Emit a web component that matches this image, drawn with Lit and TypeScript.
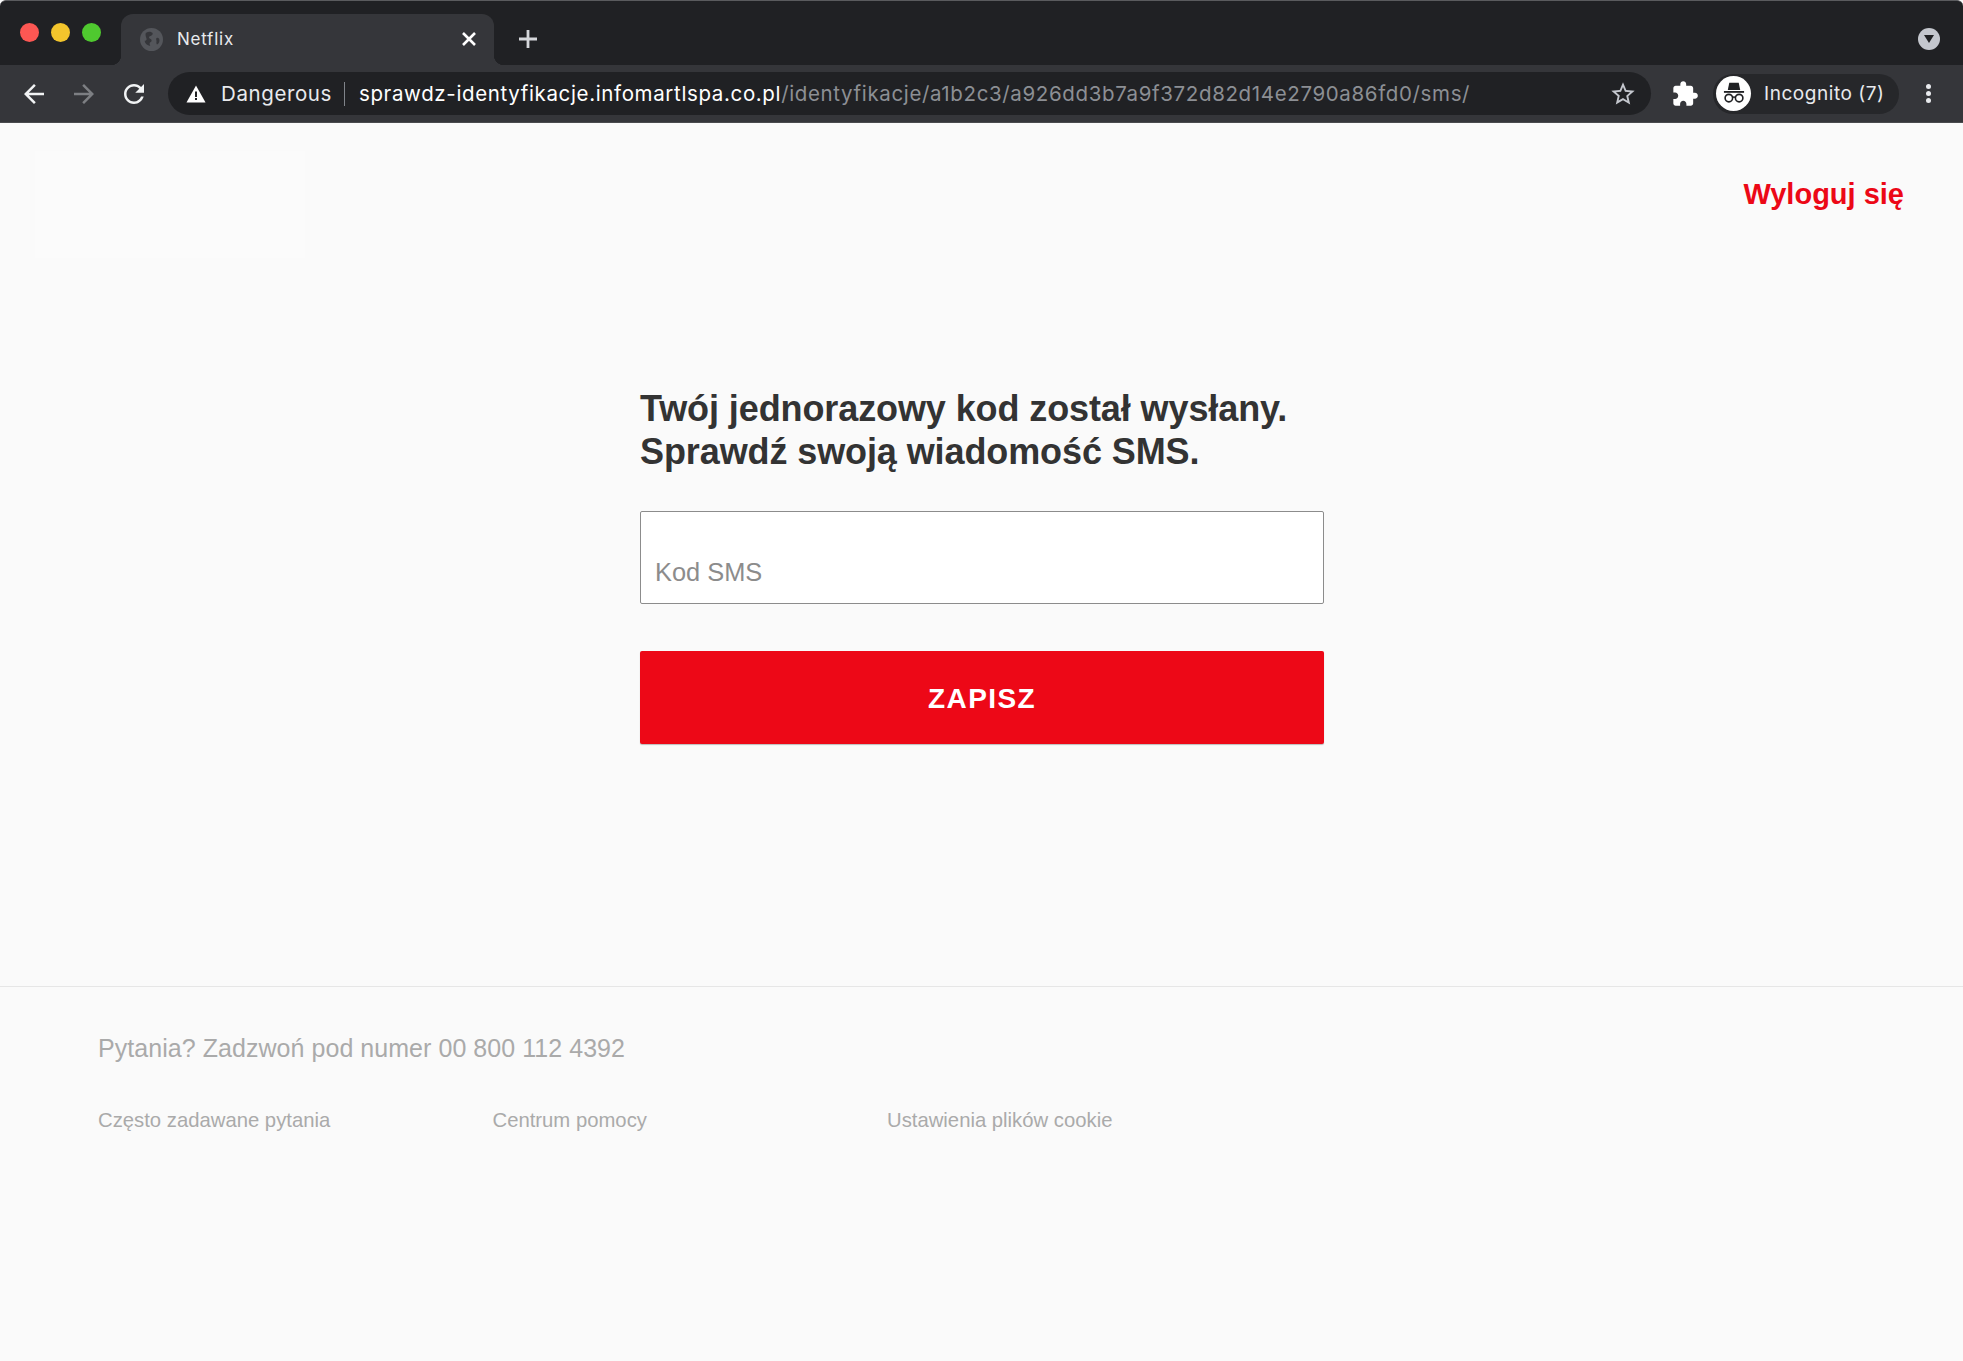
import { LitElement, html, css } from "lit";
import { customElement } from "lit/decorators.js";

@customElement("app-root")
export class AppRoot extends LitElement {
  static styles = css`
    :host { display: block; min-height: 100vh; background: #fafafa; font-family: "Liberation Sans", Arial, sans-serif; }
    .chrome { font-family: Inter, "Noto Sans", sans-serif; color: #e8eaed; }
    .strip { height: 65px; box-sizing: border-box; background: #202124; border-top: 1px solid #5a5b5e; border-radius: 6px 6px 0 0; display: flex; align-items: flex-end; padding: 0 23px 0 20px; }
    .lights { display: flex; gap: 12px; align-self: flex-start; margin-top: 22px; width: 101px; }
    .light { width: 19px; height: 19px; border-radius: 50%; }
    .red { background: #fc5753; } .yellow { background: #f3c52c; } .green { background: #4fc92f; }
    .tab { position: relative; width: 373px; height: 51px; box-sizing: border-box; background: #35363a; border-radius: 12px 12px 0 0; display: flex; align-items: center; padding: 0 15px 1px 19px; }
    .tab::before, .tab::after { content: ""; position: absolute; bottom: 0; width: 10px; height: 10px; }
    .tab::before { left: -10px; background: radial-gradient(circle at 0 0, transparent 10px, #35363a 10.5px); }
    .tab::after { right: -10px; background: radial-gradient(circle at 100% 0, transparent 10px, #35363a 10.5px); }
    .favicon { width: 23px; height: 23px; flex: none; }
    .title { margin-left: 14px; font-size: 17px; letter-spacing: 0.75px; flex: 1; }
    .close { width: 20px; height: 20px; stroke: #fff; stroke-width: 2.6; fill: none; }
    .plus { width: 24px; height: 24px; margin-left: 22px; margin-bottom: 14px; stroke: #d5d7db; stroke-width: 2.8; fill: none; }
    .spacer { flex: 1; }
    .profile { width: 22px; height: 22px; border-radius: 50%; background: #c4c7ce; align-self: flex-start; margin-top: 27px; display: flex; align-items: center; justify-content: center; }
    .profile svg { width: 10px; height: 8px; fill: #202124; }
    .toolbar { height: 58px; box-sizing: border-box; background: #35363a; display: flex; align-items: center; padding: 0 23px 0 19px; border-bottom: 1px solid #4a4b4e; }
    .nav { width: 30px; height: 30px; fill: #f1f3f4; flex: none; }
    .nav.dim { fill: #7d7f83; margin-left: 20px; }
    .nav.reload { margin-left: 20px; width: 30px; }
    .omni { margin-left: 19px; width: 1483px; height: 43px; box-sizing: border-box; background: #202124; border-radius: 22px; display: flex; align-items: center; padding: 0 14px 0 16px; flex: none; }
    .warn { width: 24px; height: 24px; flex: none; }
    .danger { margin-left: 13px; font-size: 20.5px; letter-spacing: 0.6px; color: #e8eaed; }
    .sep { width: 1px; height: 24px; background: #80848a; margin: 0 14px 0 12px; }
    .url { font-size: 20.5px; letter-spacing: 0.64px; flex: 1; white-space: nowrap; color: #fff; }
    .url span { color: #8c8f94; }
    .star { width: 28px; height: 28px; fill: #c4c7ce; flex: none; }
    .puzzle { width: 28px; height: 28px; fill: #fff; margin-left: 20px; flex: none; }
    .pill { margin-left: 14px; width: 186px; height: 40px; box-sizing: border-box; border-radius: 20px; background: #26272a; display: flex; align-items: center; padding-left: 3px; flex: none; }
    .avatar { width: 35px; height: 35px; border-radius: 50%; background: #fff; display: flex; align-items: center; justify-content: center; flex: none; }
    .avatar svg { width: 30px; height: 30px; }
    .inc { margin-left: 13px; font-size: 19px; letter-spacing: 0.55px; color: #e8eaed; white-space: nowrap; }
    .dots { margin-left: 27px; width: 6px; display: flex; flex-direction: column; gap: 2px; flex: none; }
    .dots i { width: 5px; height: 5px; border-radius: 50%; background: #e8eaed; }

    header { display: flex; justify-content: space-between; align-items: flex-start; padding: 28px 59px 0 35px; height: 264px; box-sizing: border-box; }
    .logo { width: 270px; height: 107px; background: #fbfbfb; }
    .logout { color: #ec0816; font-size: 29px; font-weight: 700; text-decoration: none; margin-top: 27px; }
    main { height: 599px; box-sizing: border-box; padding-left: 640px; }
    h1 { margin: 0 0 38px; font-size: 36px; line-height: 43px; font-weight: 700; color: #333; letter-spacing: -0.1px; }
    .field { width: 684px; height: 93px; box-sizing: border-box; background: #fff; border: 1.5px solid #8c8c8c; border-radius: 2px; padding: 45px 0 0 14px; font-size: 25.4px; line-height: 30px; color: #8c8c8c; }
    .btn { display: block; margin-top: 47px; width: 684px; height: 93px; background: #ed0817; color: #fff; border: none; border-radius: 2px; font: 700 28px "Liberation Sans", Arial, sans-serif; letter-spacing: 1.4px; padding-top: 4px; box-shadow: 0 1px 1px rgba(0,0,0,.25); }
    footer { border-top: 1px solid #e6e6e6; padding: 46px 0 0 98px; color: #aaa; }
    .q { font-size: 25px; line-height: 30px; letter-spacing: 0.05px; }
    .links { display: flex; margin-top: 44px; font-size: 20.3px; line-height: 26px; }
    .links a { width: 394.5px; color: #aaa; text-decoration: none; }
  `;

  render() {
    return html`
      <div class="chrome">
        <div class="strip">
          <div class="lights"><div class="light red"></div><div class="light yellow"></div><div class="light green"></div></div>
          <div class="tab">
            <svg class="favicon" viewBox="0 0 22 22">
              <circle cx="11" cy="11" r="11" fill="#54565b"/>
              <path d="M6 4.5c2 -1.6 5 -1.2 6 .4 .8 1.4 -1 2.6 -2.6 3 -1.2 .4 -1 1.8 .4 2.4 1.8 .8 1.6 2.6 .4 3.2 -1.6 .8 -1 2.6 -.4 3.6 -3 -.4 -5 -2.4 -5.4 -5 1.4 .4 2.2 -.6 1.8 -2 -.4 -1.6 -1.4 -3.4 -.6 -5.6z" fill="#35363a"/>
              <path d="M16 9.5c1.6 -.4 2.6 .8 2.6 2.4 0 1.8 -1 3.4 -2.4 4 -.8 -1.2 -.4 -2.4 -.4 -3.4 0 -1 -1 -2.6 .2 -3z" fill="#35363a"/>
            </svg>
            <span class="title">Netflix</span>
            <svg class="close" viewBox="0 0 20 20"><path d="M4 4l12 12M16 4L4 16"/></svg>
          </div>
          <svg class="plus" viewBox="0 0 24 24"><path d="M12 3v18M3 12h18"/></svg>
          <div class="spacer"></div>
          <div class="profile"><svg viewBox="0 0 10 8"><path d="M0 0h10L5 8z"/></svg></div>
        </div>
        <div class="toolbar">
          <svg class="nav" viewBox="0 0 24 24"><path d="M20 11H7.83l5.59-5.59L12 4l-8 8 8 8 1.41-1.41L7.83 13H20v-2z"/></svg>
          <svg class="nav dim" viewBox="0 0 24 24"><path d="M4 11h12.17l-5.59-5.59L12 4l8 8-8 8-1.41-1.41L16.17 13H4v-2z"/></svg>
          <svg class="nav reload" viewBox="0 0 24 24"><path d="M17.65 6.35C16.2 4.9 14.21 4 12 4c-4.42 0-7.99 3.58-7.99 8s3.57 8 7.99 8c3.73 0 6.84-2.55 7.73-6h-2.08c-.82 2.33-3.04 4-5.65 4-3.31 0-6-2.69-6-6s2.69-6 6-6c1.66 0 3.14.69 4.22 1.78L13 11h7V4l-2.35 2.35z"/></svg>
          <div class="omni">
            <svg class="warn" viewBox="0 0 24 24">
              <path d="M2.5 20.5h19L12 3.5z" fill="#fff"/>
              <rect x="11" y="9.5" width="2" height="5.5" fill="#202124"/>
              <rect x="11" y="16" width="2" height="2" fill="#202124"/>
            </svg>
            <span class="danger">Dangerous</span>
            <span class="sep"></span>
            <span class="url">sprawdz-identyfikacje.infomartlspa.co.pl<span>/identyfikacje/a1b2c3/a926dd3b7a9f372d82d14e2790a86fd0/sms/</span></span>
            <svg class="star" viewBox="0 0 24 24"><path d="M22 9.24l-7.19-.62L12 2 9.19 8.63 2 9.24l5.46 4.73L5.82 21 12 17.27 18.18 21l-1.63-7.03L22 9.24zM12 15.4l-3.76 2.27 1-4.28-3.32-2.88 4.38-.38L12 6.1l1.71 4.04 4.38.38-3.32 2.88 1 4.28L12 15.4z"/></svg>
          </div>
          <svg class="puzzle" viewBox="0 0 24 24"><path d="M20.5 11H19V7c0-1.1-.9-2-2-2h-4V3.5C13 2.12 11.88 1 10.5 1S8 2.12 8 3.5V5H4c-1.1 0-1.99.9-1.99 2v3.8H3.5c1.49 0 2.7 1.21 2.7 2.7s-1.21 2.7-2.7 2.7H2V20c0 1.1.9 2 2 2h3.8v-1.5c0-1.49 1.21-2.7 2.7-2.7 1.49 0 2.7 1.21 2.7 2.7V22H17c1.1 0 2-.9 2-2v-4h1.5c1.38 0 2.5-1.12 2.5-2.5S21.88 11 20.5 11z"/></svg>
          <div class="pill">
            <div class="avatar">
              <svg viewBox="0 0 28 28" fill="#202124">
                <path d="M9.6 3.6h8.8l1.4 6.6H8.2z"/>
                <rect x="4.6" y="11.2" width="18.8" height="1.7"/>
                <circle cx="9.2" cy="17.8" r="3.5" fill="none" stroke="#202124" stroke-width="1.5"/>
                <circle cx="18.8" cy="17.8" r="3.5" fill="none" stroke="#202124" stroke-width="1.5"/>
                <path d="M12.6 17.2q1.4-.9 2.8 0" fill="none" stroke="#202124" stroke-width="1.3"/>
              </svg>
            </div>
            <span class="inc">Incognito (7)</span>
          </div>
          <div class="dots"><i></i><i></i><i></i></div>
        </div>
      </div>
      <header>
        <div class="logo"></div>
        <a class="logout">Wyloguj się</a>
      </header>
      <main>
        <h1>Twój jednorazowy kod został wysłany.<br />Sprawdź swoją wiadomość SMS.</h1>
        <div class="field">Kod SMS</div>
        <button class="btn">ZAPISZ</button>
      </main>
      <footer>
        <div class="q">Pytania? Zadzwoń pod numer 00 800 112 4392</div>
        <div class="links">
          <a>Często zadawane pytania</a>
          <a>Centrum pomocy</a>
          <a>Ustawienia plików cookie</a>
        </div>
      </footer>
    `;
  }
}
